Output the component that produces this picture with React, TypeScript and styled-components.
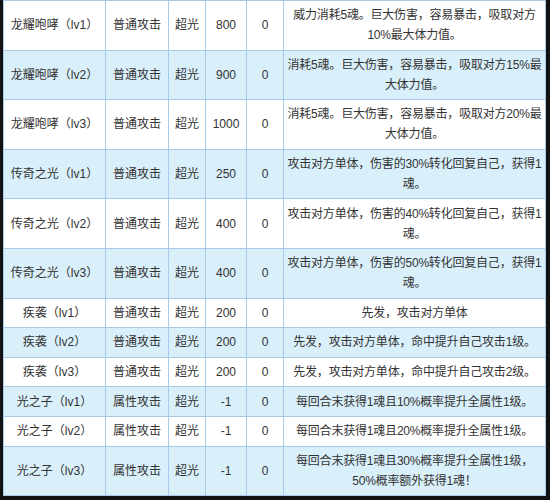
import styled, { createGlobalStyle } from "styled-components";

type Skill = {
  name: string;
  kind: string;
  attr: string;
  power: string;
  pp: string;
  desc: string[];
};

const skills: Skill[] = [
  { name: "龙耀咆哮（lv1）", kind: "普通攻击", attr: "超光", power: "800", pp: "0", desc: ["威力消耗5魂。巨大伤害，容易暴击，吸取对方", "10%最大体力值。"] },
  { name: "龙耀咆哮（lv2）", kind: "普通攻击", attr: "超光", power: "900", pp: "0", desc: ["消耗5魂。巨大伤害，容易暴击，吸取对方15%最", "大体力值。"] },
  { name: "龙耀咆哮（lv3）", kind: "普通攻击", attr: "超光", power: "1000", pp: "0", desc: ["消耗5魂。巨大伤害，容易暴击，吸取对方20%最", "大体力值。"] },
  { name: "传奇之光（lv1）", kind: "普通攻击", attr: "超光", power: "250", pp: "0", desc: ["攻击对方单体，伤害的30%转化回复自己，获得1", "魂。"] },
  { name: "传奇之光（lv2）", kind: "普通攻击", attr: "超光", power: "400", pp: "0", desc: ["攻击对方单体，伤害的40%转化回复自己，获得1", "魂。"] },
  { name: "传奇之光（lv3）", kind: "普通攻击", attr: "超光", power: "400", pp: "0", desc: ["攻击对方单体，伤害的50%转化回复自己，获得1", "魂。"] },
  { name: "疾袭（lv1）", kind: "普通攻击", attr: "超光", power: "200", pp: "0", desc: ["先发，攻击对方单体"] },
  { name: "疾袭（lv2）", kind: "普通攻击", attr: "超光", power: "200", pp: "0", desc: ["先发，攻击对方单体，命中提升自己攻击1级。"] },
  { name: "疾袭（lv3）", kind: "普通攻击", attr: "超光", power: "200", pp: "0", desc: ["先发，攻击对方单体，命中提升自己攻击2级。"] },
  { name: "光之子（lv1）", kind: "属性攻击", attr: "超光", power: "-1", pp: "0", desc: ["每回合末获得1魂且10%概率提升全属性1级。"] },
  { name: "光之子（lv2）", kind: "属性攻击", attr: "超光", power: "-1", pp: "0", desc: ["每回合末获得1魂且20%概率提升全属性1级。"] },
  { name: "光之子（lv3）", kind: "属性攻击", attr: "超光", power: "-1", pp: "0", desc: ["每回合末获得1魂且30%概率提升全属性1级，", "50%概率额外获得1魂！"] },
];

const widths = [102, 63, 37, 41, 37, 262];

export default function App() {
  return (
    <>
      <GlobalStyle />
      <Frame>
        <Table>
          <colgroup>
            {widths.map((w, i) => (
              <col key={i} style={{ width: w }} />
            ))}
          </colgroup>
          <tbody>
            {skills.map((s, i) => (
              <Row key={i} $alt={i % 2 === 1}>
                <Cell>{s.name}</Cell>
                <Cell>{s.kind}</Cell>
                <Cell>{s.attr}</Cell>
                <Cell>{s.power}</Cell>
                <Cell>{s.pp}</Cell>
                <DescCell>
                  {s.desc.map((line, j) => (
                    <Line key={j}>{line}</Line>
                  ))}
                </DescCell>
              </Row>
            ))}
          </tbody>
        </Table>
      </Frame>
    </>
  );
}

//style
const GlobalStyle = createGlobalStyle`
  html, body {
    margin: 0;
    padding: 0;
    background: #121212;
  }
`;

const Frame = styled.div`
  width: 550px;
  height: 500px;
  padding: 0 5px 4px 3px;
  box-sizing: border-box;
  background: #121212;
  overflow: hidden;
`;

const Table = styled.table`
  width: 542px;
  table-layout: fixed;
  border-collapse: collapse;
  font-family: "Liberation Sans", "Noto Sans CJK SC", sans-serif;
  font-size: 12px;
  color: #333;
`;

const Row = styled.tr<{ $alt: boolean }>`
  background: ${(p) => (p.$alt ? "#d9effa" : "#ffffff")};
`;

const Cell = styled.td`
  border: 1px solid #a9cbea;
  padding: 4.3px 1px;
  line-height: 20px;
  text-align: center;
  white-space: nowrap;
  overflow: visible;
`;

const DescCell = styled(Cell)`
  padding: 4.3px 2px;
`;

const Line = styled.div`
  white-space: nowrap;
  letter-spacing: -0.2px;
`;
